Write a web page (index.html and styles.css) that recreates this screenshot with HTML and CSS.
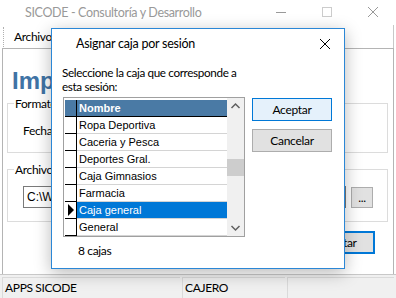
FILE: index.html
```html
<!DOCTYPE html>
<html lang="es">

<head>
  <meta charset="UTF-8">
  <meta name="viewport" content="width=device-width, initial-scale=1.0">
  <title>SICODE - Consultoría y Desarrollo</title>
  <link rel="stylesheet" href="styles.css">
</head>

<body>
  <div class="window">
    <div class="titlebar">
      <span class="title">SICODE - Consultoría y Desarrollo</span>
      <div class="controls">
        <svg class="ctl" width="46" height="24" viewBox="0 0 46 24"><path d="M18 12.5h10" stroke="#999" fill="none"/></svg>
        <svg class="ctl" width="46" height="24" viewBox="0 0 46 24"><rect x="18.5" y="7.5" width="9" height="9" stroke="#ccc" fill="none"/></svg>
        <svg class="ctl" width="46" height="24" viewBox="0 0 46 24"><path d="M18 7l10 10M28 7l-10 10" stroke="#999" fill="none"/></svg>
      </div>
    </div>

    <div class="menubar">
      <span class="grip"></span>
      <span class="menu-item">Archivo</span>
    </div>

    <div class="content">
      <h1 class="heading">Imp</h1>

      <div class="group group-format">
        <span class="group-label">Formato</span>
        <span class="field-label">Fecha</span>
      </div>

      <div class="group group-file">
        <span class="group-label">Archivo</span>
        <div class="file-row">
          <div class="text-input">C:\We</div>
          <button class="btn btn-small">...</button>
        </div>
      </div>

      <div class="actions">
        <button class="btn btn-default btn-import">Importar</button>
      </div>
    </div>

    <div class="statusbar">
      <div class="panel panel-app">APPS SICODE</div>
      <div class="panel panel-role">CAJERO</div>
      <div class="panel panel-rest"></div>
    </div>
  </div>

  <div class="dialog">
    <div class="dialog-title">
      <span>Asignar caja por sesión</span>
      <svg class="dialog-close" width="12" height="12" viewBox="0 0 12 12"><path d="M1 1l10 10M11 1L1 11" stroke="#000" fill="none"/></svg>
    </div>
    <div class="dialog-body">
      <div class="dialog-main">
        <p class="prompt">Seleccione la caja que corresponde a<br>esta sesión:</p>

        <div class="grid">
          <div class="grid-data">
            <div class="row row-head">
              <div class="indicator"></div>
              <div class="cell">Nombre</div>
            </div>
            <div class="row">
              <div class="indicator"></div>
              <div class="cell">Ropa Deportiva</div>
            </div>
            <div class="row">
              <div class="indicator"></div>
              <div class="cell">Caceria y Pesca</div>
            </div>
            <div class="row">
              <div class="indicator"></div>
              <div class="cell">Deportes Gral.</div>
            </div>
            <div class="row">
              <div class="indicator"></div>
              <div class="cell">Caja Gimnasios</div>
            </div>
            <div class="row">
              <div class="indicator"></div>
              <div class="cell">Farmacia</div>
            </div>
            <div class="row row-selected">
              <div class="indicator">
                <svg width="8" height="12" viewBox="0 0 8 12"><polygon points="1,0 7,6 1,12" fill="#000"/></svg>
              </div>
              <div class="cell">Caja general</div>
            </div>
            <div class="row">
              <div class="indicator"></div>
              <div class="cell">General</div>
            </div>
          </div>

          <div class="scrollbar">
            <svg class="arrow" width="17" height="17" viewBox="0 0 17 17"><path d="M4.5 10l4-4 4 4" stroke="#606060" stroke-width="1.5" fill="none"/></svg>
            <div class="track">
              <div class="thumb"></div>
            </div>
            <svg class="arrow" width="17" height="17" viewBox="0 0 17 17"><path d="M4.5 7l4 4 4-4" stroke="#606060" stroke-width="1.5" fill="none"/></svg>
          </div>
        </div>

        <p class="count">8 cajas</p>
      </div>

      <div class="dialog-buttons">
        <button class="btn btn-default">Aceptar</button>
        <button class="btn">Cancelar</button>
      </div>
    </div>
  </div>
</body>

</html>
```

FILE: styles.css
```css
body {
  font-family: Lato, "Noto Sans", sans-serif;
  font-size: 12px;
  letter-spacing: -0.35px;
  margin: 0;
  padding: 0;
  width: 396px;
  height: 298px;
  overflow: hidden;
  position: relative;
  background-color: #fff;
  color: #000;
}

.window {
  display: flex;
  flex-direction: column;
  height: 298px;
}

.titlebar {
  height: 25px;
  display: flex;
  align-items: center;
  justify-content: space-between;
  background-color: #fff;
}

.title {
  padding-left: 25px;
  color: #999;
  font-size: 12.5px;
}

.controls {
  display: flex;
  align-self: flex-start;
}

.menubar {
  height: 23px;
  display: flex;
  align-items: center;
  background-color: #fff;
  border-right: 1px solid #c8c8c8;
  margin-right: 2px;
}

.grip {
  width: 1px;
  height: 20px;
  margin: 0 9px 0 3px;
  border-left: 1px dotted #b0b0b0;
}

.content {
  flex: 1;
  margin: 0 2px;
  border: 1px solid #b4b4b4;
  border-bottom: none;
  padding: 0 4px;
  background-color: #fff;
  position: relative;
}

.heading {
  margin: 20px 0 0 5px;
  height: 34px;
  line-height: 24px;
  font-family: "Liberation Sans", Arial, sans-serif;
  font-size: 24px;
  font-weight: bold;
  letter-spacing: 0;
  color: #3f73a5;
  white-space: nowrap;
}

.group {
  border: 1px solid #dcdcdc;
  margin-right: 1px;
  position: relative;
}

.group-label {
  position: absolute;
  top: -7px;
  left: 6px;
  background-color: #fff;
  padding: 0 2px 0 1px;
  line-height: 14px;
}

.group-format {
  height: 48px;
}

.field-label {
  position: absolute;
  left: 15px;
  top: 19px;
}

.group-file {
  margin-top: 16px;
  height: 51px;
}

.file-row {
  display: flex;
  gap: 5px;
  padding: 16px 0 0 15px;
}

.text-input {
  width: 323px;
  height: 22px;
  box-sizing: border-box;
  border: 1px solid #7a7a7a;
  padding: 2px 3px;
  line-height: 16px;
  font-family: "Liberation Sans", Arial, sans-serif;
  font-size: 12px;
  letter-spacing: 0;
  white-space: nowrap;
  overflow: hidden;
}

.btn {
  font-family: Lato, "Noto Sans", sans-serif;
  font-size: 12px;
  letter-spacing: -0.3px;
  background-color: #e1e1e1;
  border: 1px solid #adadad;
  color: #000;
  padding: 0;
  width: 80px;
  height: 23px;
  box-sizing: border-box;
}

.btn-default {
  background-color: #e5f1fb;
  border-color: #0078d7;
}

.btn-small {
  width: 22px;
  height: 21px;
  margin-top: 1px;
}

.actions {
  display: flex;
  justify-content: flex-end;
  padding: 9px 14px 0 0;
}

.btn-import {
  background-color: #e1e1e1;
  border: 2px solid #0078d7;
  width: 80px;
}

.statusbar {
  height: 24px;
  display: flex;
  background-color: #f0f0f0;
  border-top: 1px solid #c8c8c8;
  padding: 2px 2px 0 2px;
  box-sizing: border-box;
  gap: 2px;
}

.panel {
  border-top: 1px solid #dadada;
  border-left: 1px solid #dadada;
  padding-left: 2px;
  line-height: 20px;
}

.panel-app {
  width: 175px;
}

.panel-role {
  width: 100px;
}

.panel-rest {
  flex: 1;
}

/* dialog */

.dialog {
  position: absolute;
  left: 51px;
  top: 28px;
  width: 294px;
  height: 241px;
  box-sizing: border-box;
  border: 1px solid #2b87d6;
  background-color: #fff;
  box-shadow: 0 4px 16px rgba(0, 0, 0, 0.28);
}

.dialog-title {
  height: 28px;
  display: flex;
  align-items: center;
  justify-content: space-between;
  padding: 0 13px 0 24px;
  font-size: 12.5px;
  letter-spacing: -0.25px;
}

.dialog-close {
  margin-top: 1px;
}

.dialog-body {
  display: flex;
  gap: 6px;
  padding: 8px 0 0 10px;
}

.dialog-main {
  width: 184px;
}

.prompt {
  margin: 0;
  font-size: 11.7px;
  line-height: 14px;
  white-space: nowrap;
}

.grid {
  margin: 4px 0 0 1px;
  width: 182px;
  height: 140px;
  box-sizing: border-box;
  border: 1px solid #a0a0a0;
  display: flex;
}

.grid-data {
  width: 162px;
  padding: 2px 0 0 1px;
  font-family: "Liberation Sans", Arial, sans-serif;
  font-size: 11px;
  letter-spacing: 0;
}

.row {
  display: flex;
  height: 17px;
}

.indicator {
  width: 12px;
  box-sizing: border-box;
  border-right: 1px solid #000;
  border-bottom: 1px solid #000;
  display: flex;
  align-items: center;
  padding-left: 2px;
}

.cell {
  flex: 1;
  border-bottom: 1px solid #d4d4d4;
  padding-left: 2px;
  line-height: 16px;
  white-space: nowrap;
}

.row-head .indicator,
.row-head .cell {
  background-color: #4a7aa5;
  border-bottom-color: #000;
}

.row-head .cell {
  color: #fff;
  font-weight: bold;
}

.row-selected .cell {
  background-color: #0078d7;
  color: #fff;
}

.scrollbar {
  width: 17px;
  background-color: #f0f0f0;
  display: flex;
  flex-direction: column;
}

.track {
  flex: 1;
}

.thumb {
  margin-top: 44px;
  height: 17px;
  background-color: #cdcdcd;
}

.count {
  margin: 7px 0 0 16px;
  line-height: 14px;
}

.dialog-buttons {
  display: flex;
  flex-direction: column;
  gap: 8px;
  padding-top: 33px;
}
```
